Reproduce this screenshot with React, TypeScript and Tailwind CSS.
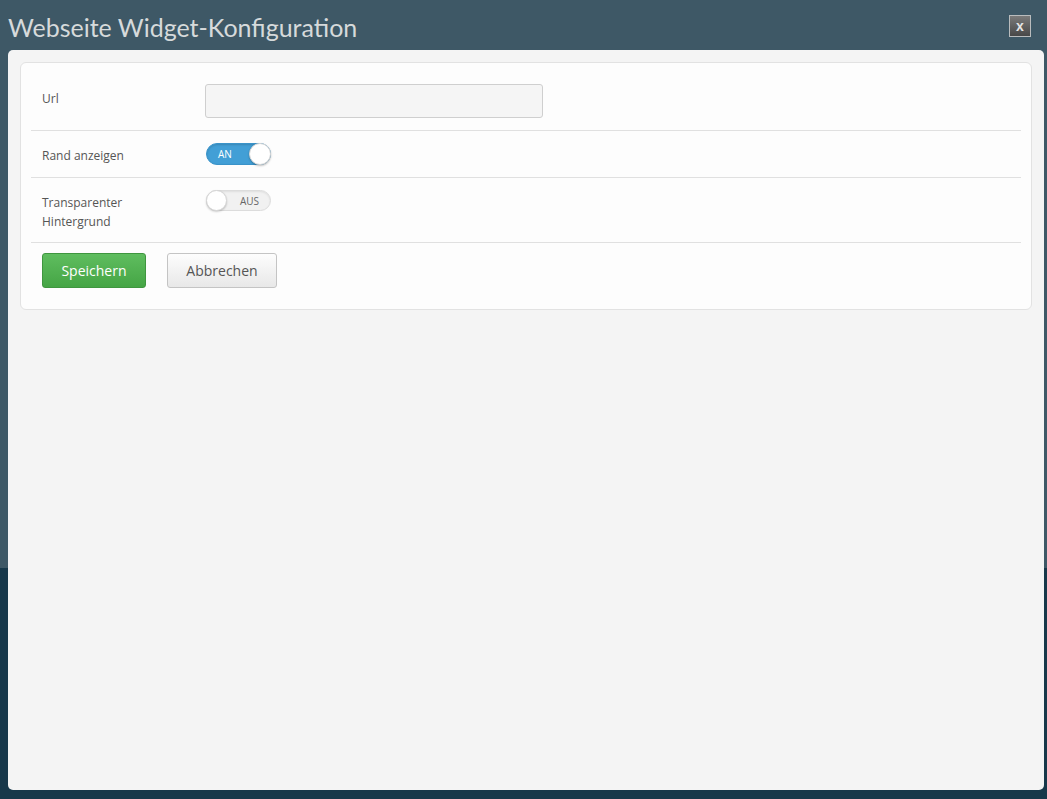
import { useState } from 'react';

interface ToggleProps {
  on: boolean;
  onChange: (v: boolean) => void;
}

const Toggle = ({ on, onChange }: ToggleProps) => {
  if (on) {
    return (
      <button
        type="button"
        onClick={() => onChange(false)}
        className="ml-px flex h-[22px] w-[65px] items-center justify-between rounded-full border border-[#3a93c9] bg-[#429fd6] pl-[11px] pr-0 shadow-[inset_0_1px_2px_rgba(0,0,0,0.15)]"
      >
        <span className="text-[10px] leading-none text-white">AN</span>
        <span className="h-[22px] w-[22px] -mr-px rounded-full border border-[#d6d6d6] bg-white shadow-[0_1px_2px_rgba(0,0,0,0.25)]" />
      </button>
    );
  }
  return (
    <button
      type="button"
      onClick={() => onChange(true)}
      className="ml-px flex h-[21px] w-[65px] items-center justify-between rounded-full border border-[#dcdcdc] bg-[#f1f1f1] pr-[11px] shadow-[inset_0_1px_2px_rgba(0,0,0,0.08)]"
    >
      <span className="h-[21px] w-[21px] -ml-px rounded-full border border-[#d6d6d6] bg-white shadow-[0_1px_2px_rgba(0,0,0,0.2)]" />
      <span className="text-[10px] leading-none text-[#666]">AUS</span>
    </button>
  );
};

const App = () => {
  const [url, setUrl] = useState('');
  const [border, setBorder] = useState(true);
  const [transparent, setTransparent] = useState(false);

  return (
    <div
      className="flex h-[799px] w-full flex-col bg-[linear-gradient(to_bottom,#3e5866_0,#3e5866_568px,#17384a_568px)]"
      style={{ fontFamily: '"Open Sans", "Noto Sans", sans-serif' }}
    >
      {/* header */}
      <div className="flex h-[50px] items-center justify-between pl-2 pr-4">
        <h1
          className="mt-[4px] text-[25px] leading-none text-[#d6dadb]"
          style={{ fontFamily: 'Lato, "Open Sans", sans-serif' }}
        >
          Webseite Widget-Konfiguration
        </h1>
        <button
          type="button"
          className="mt-[2px] flex h-[22px] w-[22px] items-center justify-center border border-[#b9bcbd] bg-[linear-gradient(to_bottom,#7a7a7a,#484848)] text-[14px] font-bold leading-none text-[#e6e6e6]"
          style={{ fontFamily: '"Liberation Sans", Arial, sans-serif' }}
        >
          x
        </button>
      </div>

      {/* body */}
      <div className="mb-[9px] ml-2 mr-[3px] flex-1 rounded-[5px] bg-[#f4f4f4] p-3">
        <div className="rounded-md border border-[#e2e2e2] bg-[#fdfdfd] px-[10px]">
          <div className="flex border-b border-[#e0e0e0] pb-[12px] pt-[21px]">
            <label className="w-[174px] pl-[11px] pt-[5px] text-[12px] leading-[19px] text-[#555]">Url</label>
            <input
              value={url}
              onChange={(e) => setUrl(e.target.value)}
              className="h-[34px] w-[338px] rounded-[3px] border border-[#cfcfcf] bg-[#f5f5f5] px-2 text-[13px] outline-none"
            />
          </div>

          <div className="flex border-b border-[#e0e0e0] py-3">
            <label className="w-[174px] pl-[11px] pt-[3px] text-[12px] leading-[19px] text-[#555]">Rand anzeigen</label>
            <Toggle on={border} onChange={setBorder} />
          </div>

          <div className="flex border-b border-[#e0e0e0] pb-[11px] pt-3">
            <label className="w-[174px] pl-[11px] pt-[3px] text-[12px] leading-[19px] text-[#555]">
              Transparenter
              <br />
              Hintergrund
            </label>
            <Toggle on={transparent} onChange={setTransparent} />
          </div>

          <div className="flex gap-[21px] pb-[21px] pl-[11px] pt-[10px]">
            <button
              type="button"
              className="h-[35px] w-[104px] rounded-[3px] border border-[#3f963f] bg-[linear-gradient(to_bottom,#5fbd5f,#45a545)] text-[14px] text-white"
            >
              Speichern
            </button>
            <button
              type="button"
              className="h-[35px] w-[110px] rounded-[3px] border border-[#c4c4c4] bg-[linear-gradient(to_bottom,#fdfdfd,#e8e8e8)] text-[14px] text-[#555]"
            >
              Abbrechen
            </button>
          </div>
        </div>
      </div>
    </div>
  );
};

export default App;
